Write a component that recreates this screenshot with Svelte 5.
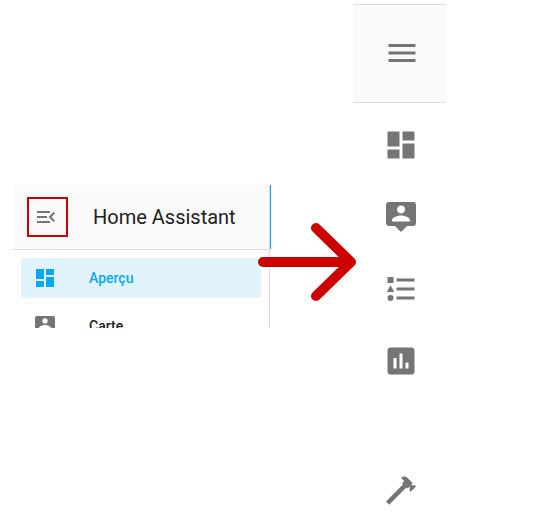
<script>
    const icons = {
        menu: "M3,6H21V8H3V6M3,11H21V13H3V11M3,16H21V18H3V16Z",
        menuOpen:
            "M21,15.61L19.59,17L14.58,12L19.59,7L21,8.39L17.44,12L21,15.61M3,6H16V8H3V6M3,13V11H13V13H3M3,18V16H16V18H3Z",
        dashboard:
            "M13,3V9H21V3M13,21H21V11H13M3,21H11V15H3M3,13H11V3H3V13Z",
        map: "M20,2A2,2 0 0,1 22,4V16A2,2 0 0,1 20,18H16L12,22L8,18H4C2.89,18 2,17.1 2,16V4C2,2.89 2.9,2 4,2H20M12,4.3C10.5,4.3 9.3,5.5 9.3,7C9.3,8.5 10.5,9.7 12,9.7C13.5,9.7 14.7,8.5 14.7,7A2.7,2.7 0 0,0 12,4.3M18,15V14.1C18,12.1 14,11 12,11C10,11 6,12.1 6,14.1V15H18Z",
        logbook:
            "M5,9.5L7.5,14H2.5L5,9.5M3,4H7V8H3V4M5,20A2,2 0 0,0 7,18A2,2 0 0,0 5,16A2,2 0 0,0 3,18A2,2 0 0,0 5,20M9,5V7H21V5H9M9,19H21V17H9V19M9,13H21V11H9V13Z",
        history:
            "M17,17H15V13H17M13,17H11V7H13M9,17H7V10H9M19,3H5C3.89,3 3,3.89 3,5V19A2,2 0 0,0 5,21H19A2,2 0 0,0 21,19V5C21,3.89 20.1,3 19,3Z",
        tools: "M2,19.63L13.43,8.2L12.72,7.5L14.14,6.07L12,3.89C13.2,2.7 15.09,2.7 16.27,3.89L19.87,7.5L18.45,8.91H21.29L22,9.62L18.45,13.21L17.74,12.5V9.62L16.27,11.04L15.56,10.33L4.13,21.76L2,19.63Z",
    };

    const items = [
        { label: "Aperçu", icon: "dashboard" },
        { label: "Carte", icon: "map" },
    ];
    const railItems = ["dashboard", "map", "logbook", "history", "tools"];

    let active = $state("dashboard");
</script>

{#snippet icon(name)}
    <svg class="icon" viewBox="0 0 24 24" aria-hidden="true">
        <path d={icons[name]} />
    </svg>
{/snippet}

<main>
    <section class="expanded">
        <aside>
            <header>
                <button class="toggle">{@render icon("menuOpen")}</button>
                <h1>Home Assistant</h1>
            </header>
            <nav>
                {#each items as item}
                    <a
                        href="#{item.icon}"
                        class:active={active === item.icon}
                        onclick={() => (active = item.icon)}>
                        {@render icon(item.icon)}
                        <span>{item.label}</span>
                    </a>
                {/each}
            </nav>
        </aside>
        <div class="app-bar"></div>
    </section>

    <div class="between">
        <svg class="arrow" viewBox="0 0 98 78" aria-hidden="true">
            <path d="M5,39H93M58,5L93,39L58,73" />
        </svg>
    </div>

    <section class="rail">
        <button class="rail-toggle">{@render icon("menu")}</button>
        <nav>
            {#each railItems as name}
                <a href="#{name}" class:last={name === "tools"}>
                    {@render icon(name)}
                </a>
            {/each}
        </nav>
    </section>
</main>

<style>
    :global(body) {
        background: #fff;
    }
    main {
        display: grid;
        grid-template-columns: 258fr 82fr 93fr 109fr;
        align-items: start;
        padding: 4px 0 4px 13px;
        font-family: Roboto, sans-serif;
        color: #212121;
    }
    button {
        margin: 0;
        font: inherit;
        cursor: pointer;
    }
    a {
        display: flex;
        align-items: center;
        color: inherit;
        text-decoration: none;
    }
    .icon {
        display: block;
        flex: none;
        width: 24px;
        height: 24px;
        fill: #757575;
        fill-rule: evenodd;
    }

    .expanded {
        display: flex;
        height: 143px;
        margin-top: 181px;
        overflow: hidden;
    }
    aside {
        flex: 1;
        border-right: 1px solid #dcdcdc;
    }
    .app-bar {
        width: 1px;
        height: 64px;
        background: #03a9f4;
    }
    header {
        display: flex;
        align-items: center;
        gap: 25px;
        height: 64px;
        padding-left: 14px;
        background: #fafafa;
        border-bottom: 1px solid #dcdcdc;
    }
    .toggle {
        display: flex;
        align-items: center;
        width: 41px;
        height: 40px;
        padding: 0 0 0 5px;
        background: none;
        border: 2px solid #cc0000;
    }
    h1 {
        margin: 0;
        font-size: 20px;
        font-weight: 400;
        white-space: nowrap;
    }
    .expanded nav {
        display: grid;
        gap: 8px;
        padding: 8px;
    }
    .expanded a {
        gap: 32px;
        height: 40px;
        padding-left: 12px;
        border-radius: 4px;
        font-size: 14px;
        font-weight: 500;
    }
    .expanded a.active {
        background: #e1f4fd;
        color: #03a9f4;
    }
    .active .icon {
        fill: #03a9f4;
    }

    .between {
        position: relative;
    }
    .arrow {
        position: absolute;
        top: 219px;
        left: -13px;
        width: 98px;
        height: 78px;
        fill: none;
        stroke: #cc0000;
        stroke-width: 10;
        stroke-linecap: round;
        stroke-linejoin: round;
    }

    .rail .icon {
        width: 36px;
        height: 36px;
    }
    .rail-toggle {
        display: flex;
        align-items: center;
        width: 100%;
        height: 99px;
        padding: 0 0 2px 31px;
        background: #fafafa;
        border: solid #dcdcdc;
        border-width: 1px 0;
    }
    .rail nav {
        padding-top: 6px;
    }
    .rail a {
        height: 72px;
        padding-left: 30px;
    }
    .rail a.last {
        margin-top: 57px;
    }
</style>
